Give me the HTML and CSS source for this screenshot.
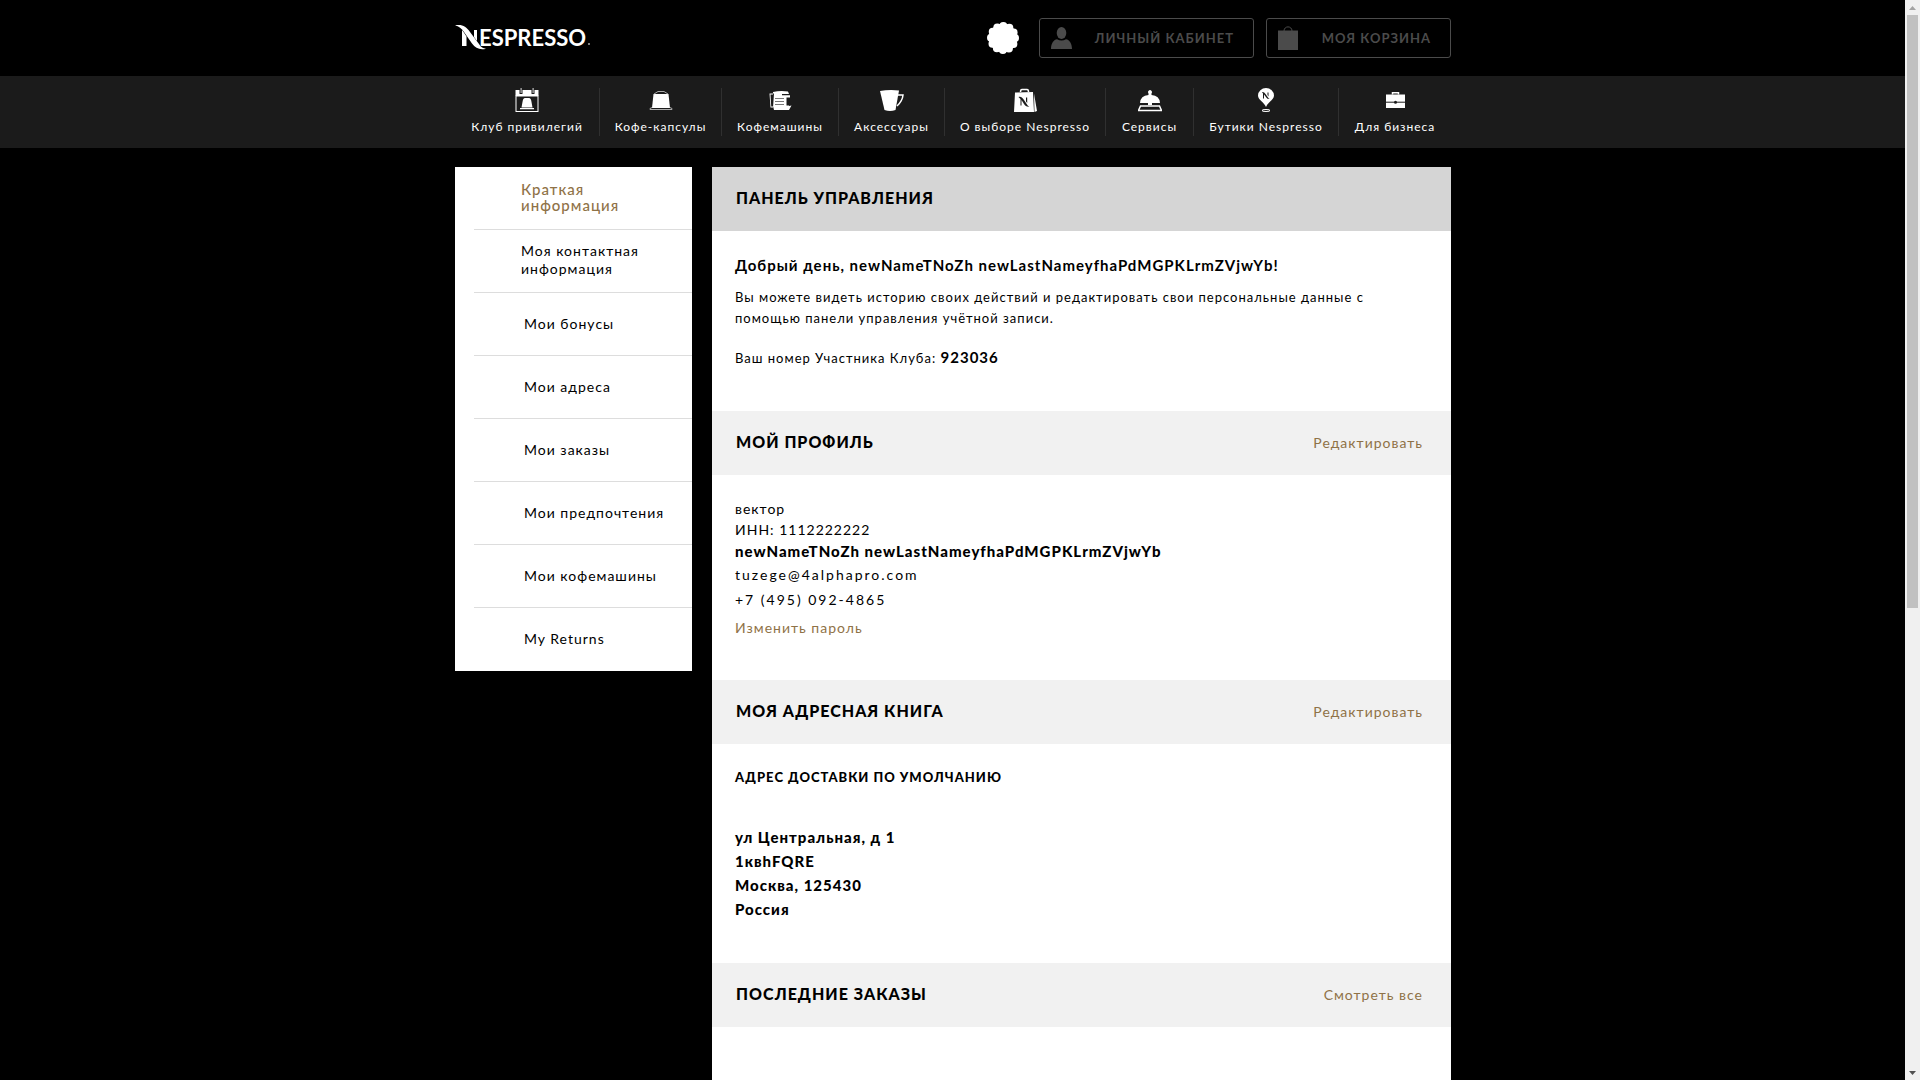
FILE: index.html
```html
<!DOCTYPE html>
<html lang="ru">
<head>
<meta charset="utf-8">
<meta name="viewport" content="width=device-width, initial-scale=1">
<title>Панель управления</title>
<link rel="stylesheet" href="styles.css">
</head>
<body>
<header class="top">
  <div class="wrap top-row">
    <a class="logo" href="#" aria-label="Nespresso">
      <svg width="138" height="28" viewBox="0 0 138 28" fill="#fff">
        <path d="M0 1.500C7 0 11 2.500 15 8L24 20C26 23.500 28 24.500 31 24.700C25 26.500 20.500 24 17 19.500L9 8C6.500 4.500 4 2 0 1.500z"/>
        <path d="M7 6L8.500 8L11.500 12.500V22H7zM19 6H22V17L19 13z"/>
        <text class="logo-text" x="24" y="22">ESPRESSO</text>
        <circle cx="134" cy="20" r="1" fill="#aaa"/>
      </svg>
    </a>
    <svg class="seal" width="32" height="32" viewBox="0 0 32 32" fill="#fff">
      <circle cx="16" cy="16" r="14"/>
      <circle cx="16" cy="16" r="12" fill="none" stroke="#fff" stroke-width="8" stroke-linecap="round" stroke-dasharray="0 6.283"/>
    </svg>
    <button class="top-btn top-btn-account" type="button">
      <svg width="21" height="22" viewBox="0 0 21 22" fill="#4b4b4b"><ellipse cx="10.500" cy="6" rx="4.800" ry="6"/><path d="M0 22C0 16 3 12.500 6 12.200Q10.500 15 15 12.200C18 12.500 21 16 21 22z"/></svg>
      <span>ЛИЧНЫЙ КАБИНЕТ</span>
    </button>
    <button class="top-btn top-btn-cart" type="button">
      <svg width="20" height="24" viewBox="0 0 20 24"><path d="M0 4.500H20V24H0z" fill="#4b4b4b"/><path d="M6 5C6 -.5 14 -.5 14 5" fill="none" stroke="#4b4b4b"/></svg>
      <span>МОЯ КОРЗИНА</span>
    </button>
  </div>
</header>

<nav class="nav">
  <ul class="wrap nav-list">
    <li><a href="#">
      <svg width="24" height="24" viewBox="0 0 24 24" fill="#fff"><path d="M.5 2H23.500V8H.5z"/><rect x="1" y="8" width="22" height="15.500" fill="none" stroke="#fff"/><path d="M4.500 0H7.500V6H4.500zM16.500 0H19.500V6H16.500z" fill="#1b1b1b"/><path d="M5.500 0H6.700V5H5.500zM17.500 0H18.700V5H17.500z" fill="#bbb"/><path d="M10 10H14Q16 10 16.500 14L17.500 19.500H6.500L7.500 14Q8 10 10 10zM5 20H19V21.200H5z"/></svg>
      <span>Клуб привилегий</span></a></li>
    <li><a href="#">
      <svg width="24" height="24" viewBox="0 0 24 24" fill="#fff"><path d="M4.500 6H19.500L21 20H3z"/><path d="M5 6L9 3.500H15L19 6M3 19.500L1 20.500V21.500H23V20.500L21 19.500" fill="none" stroke="#aaa"/></svg>
      <span>Кофе-капсулы</span></a></li>
    <li><a href="#">
      <svg width="24" height="24" viewBox="0 0 24 24" fill="#fff"><path d="M5 4Q12 2.500 20 3.500L21 6H14V7.200H22V9.500H18.500V17.500H21V18L23.500 17.500L21 22H6L5 18zM6 5.500H1.500L2.500 19.500H5" /><path d="M2.500 6.500H5V18.500H3.200z" fill="#1b1b1b"/><path d="M7 10.500H16M7 13.500H16M7 16.500H16" stroke="#777"/></svg>
      <span>Кофемашины</span></a></li>
    <li><a href="#">
      <svg width="24" height="24" viewBox="0 0 24 24"><path d="M0 3Q9 1.500 19 2.500L15.500 22Q10 24 4.500 22z" fill="#fff"/><path d="M18 7H23Q22.500 13 17 18" fill="none" stroke="#fff" stroke-width="1.500"/></svg>
      <span>Аксессуары</span></a></li>
    <li><a href="#">
      <svg width="24" height="24" viewBox="0 0 24 24" fill="#fff"><path d="M2 4.500L20 4L21 24H1zM21 5.500L24 23L21.500 24z"/><path d="M7.500 4Q7.500 1.500 9 1.500H14Q15.500 1.500 15.500 4" fill="none" stroke="#fff" stroke-width="1.500"/><path d="M5.500 9C8 8 9.500 10 11 12L14 16.500C15 18 15.500 18.500 16.500 18.700C13.500 19 12.500 18 11 16L8.500 12V17.500H7.500V11zM13 9.500H14.200V15L13 13.500z" fill="#1b1b1b"/></svg>
      <span>О выборе Nespresso</span></a></li>
    <li><a href="#">
      <svg width="24" height="24" viewBox="0 0 24 24" fill="#fff"><path d="M2 15Q2.500 7.500 10.500 7V5.500A2 2 0 1 1 13.500 5.500V7Q21.500 7.500 22 15H14V17H10V15z"/><path d="M2.500 18H21.500L23.500 22.500H.5z" fill="none" stroke="#fff" stroke-width="1.500"/></svg>
      <span>Сервисы</span></a></li>
    <li><a href="#">
      <svg width="24" height="24" viewBox="0 0 24 24" fill="#fff"><path d="M12 19C10 14 4 12 4 7.500A8 7.500 0 0 1 20 7.500C20 12 14 14 12 19z"/><ellipse cx="12" cy="22.500" rx="4" ry="1" fill="none" stroke="#fff"/><path d="M8 4Q10 3.500 11.500 6L14 9.500Q15 11 16 11Q13.500 11.500 12.300 9.500L10 6.500V10.500H9V5.500zM13.500 4.500H14.500V8.500L13.500 7z" fill="#1b1b1b"/></svg>
      <span>Бутики Nespresso</span></a></li>
    <li><a href="#">
      <svg width="24" height="24" viewBox="0 0 24 24" fill="#fff"><path d="M3 6.500H22V20H3z"/><path d="M9.500 6.500V4.700H15.500V6.500" fill="none" stroke="#fff" stroke-width="1.500"/><path d="M3 14.200H22" stroke="#1b1b1b"/><circle cx="12.500" cy="14.200" r="1.500" fill="#1b1b1b"/></svg>
      <span>Для бизнеса</span></a></li>
  </ul>
</nav>

<div class="wrap page">
  <aside class="side">
    <ul>
      <li class="two-line current"><a href="#">Краткая<br>информация</a></li>
      <li class="two-line"><a href="#">Моя контактная<br>информация</a></li>
      <li><a href="#">Мои бонусы</a></li>
      <li><a href="#">Мои адреса</a></li>
      <li><a href="#">Мои заказы</a></li>
      <li><a href="#">Мои предпочтения</a></li>
      <li><a href="#">Мои кофемашины</a></li>
      <li><a href="#">My Returns</a></li>
    </ul>
  </aside>
  <main class="panel">
    <section>
      <div class="bar bar-main"><h1>ПАНЕЛЬ УПРАВЛЕНИЯ</h1></div>
      <div class="body">
        <p class="hello">Добрый день, newNameTNoZh newLastNameyfhaPdMGPKLrmZVjwYb!</p>
        <p class="intro">Вы можете видеть историю своих действий и редактировать свои персональные данные с помощью панели управления учётной записи.</p>
        <p class="member">Ваш номер Участника Клуба: <strong>923036</strong></p>
      </div>
    </section>
    <section>
      <div class="bar"><h2>МОЙ ПРОФИЛЬ</h2><a href="#">Редактировать</a></div>
      <div class="body">
        <p>вектор</p>
        <p>ИНН: 1112222222</p>
        <p class="name">newNameTNoZh newLastNameyfhaPdMGPKLrmZVjwYb</p>
        <p class="contact">tuzege@4alphapro.com</p>
        <p class="contact">+7 (495) 092-4865</p>
        <p class="password"><a href="#">Изменить пароль</a></p>
      </div>
    </section>
    <section>
      <div class="bar"><h2>МОЯ АДРЕСНАЯ КНИГА</h2><a href="#">Редактировать</a></div>
      <div class="body">
        <h3>АДРЕС ДОСТАВКИ ПО УМОЛЧАНИЮ</h3>
        <address>ул Центральная, д 1<br>1квhFQRE<br>Москва, 125430<br>Россия</address>
      </div>
    </section>
    <section>
      <div class="bar"><h2>ПОСЛЕДНИЕ ЗАКАЗЫ</h2><a href="#">Смотреть все</a></div>
    </section>
  </main>
</div>

<div class="scrollbar" aria-hidden="true">
  <span class="arrow arrow-up"></span>
  <span class="track"><span class="thumb"></span></span>
  <span class="arrow arrow-down"></span>
</div>
</body>
</html>
```
FILE: styles.css
```css
* { box-sizing: border-box; }

body {
  margin: 0;
  padding-right: 14px;
  min-height: 100vh;
  display: flex;
  flex-direction: column;
  background: #000;
  color: #000;
  font: 14px/21px Lato, "Noto Sans", sans-serif;
  letter-spacing: 1px;
}

h1, h2, h3, p, ul { margin: 0; padding: 0; }
ul { list-style: none; }
a { color: #8f7247; text-decoration: none; }
svg { display: block; }

.wrap { width: 100%; max-width: 996px; margin: 0 auto; }

/* Header */
.top-row {
  display: flex;
  align-items: center;
  gap: 12px;
  padding: 18px 0;
}
.logo { margin-right: auto; }
.logo-text { font: 700 22px Lato, sans-serif; letter-spacing: 0; }
.seal { margin-right: 8px; }
.top-btn {
  display: flex;
  align-items: center;
  justify-content: space-between;
  height: 40px;
  padding: 0 19px 0 11px;
  border: 1px solid #4b4b4b;
  border-radius: 3px;
  background: #000;
  color: #4b4b4b;
  font: 700 13px/21px Lato, sans-serif;
  letter-spacing: 1px;
}
.top-btn-account { width: 215px; }
.top-btn-cart { width: 185px; }

/* Main navigation */
.nav { margin-right: -14px; padding: 12px 14px 12px 0; background: #1b1b1b; }
.nav-list {
  display: grid;
  grid-template-columns: 145fr 122fr 117fr 106fr 161fr 88fr 145fr 112fr;
}
.nav-list li { height: 48px; border-right: 1px solid #303030; }
.nav-list li:last-child { border-right: 0; }
.nav-list a {
  display: flex;
  flex-direction: column;
  align-items: center;
  gap: 7px;
  color: #fff;
  font-size: 12px;
  line-height: 16px;
  white-space: nowrap;
}

/* Page columns */
.page {
  flex: 1;
  display: grid;
  grid-template-columns: 237px 1fr;
  gap: 20px;
  padding-top: 19px;
}

.side { align-self: start; padding-left: 19px; background: #fff; }
.side li {
  display: flex;
  align-items: center;
  height: 63px;
  padding: 0 0 2px 50px;
  border-bottom: 1px solid #ddd;
}
.side li:last-child { border-bottom: 0; }
.side a { color: #000; }
.side .two-line { padding-left: 47px; }
.side .two-line a { line-height: 18px; }
.side .current a { color: #8f7247; font-size: 15px; font-weight: 500; line-height: 16px; }

.panel { background: #fff; }
.bar {
  display: flex;
  align-items: center;
  justify-content: space-between;
  height: 64px;
  padding: 0 28px 2px 24px;
  background: #f1f1f1;
}
.bar-main { background: #d5d5d5; }
.bar h1, .bar h2 { font-size: 16px; line-height: 20px; font-weight: 900; }
.body { padding: 23px 40px 42px 23px; }

.hello { font-size: 15px; line-height: 22px; font-weight: 700; }
.intro, .member { font-size: 13px; }
.intro { margin-top: 11px; }
.member { margin-top: 19px; }
.member strong { font-size: 15px; font-weight: 700; line-height: 16px; }
.name { font-size: 15px; line-height: 22px; font-weight: 900; }
.contact { line-height: 25px; letter-spacing: 2px; }
.password { margin-top: 5px; }
h3 { font-size: 13px; line-height: 21px; font-weight: 900; }
address {
  margin-top: 37px;
  font-size: 15px;
  line-height: 24px;
  font-style: normal;
  font-weight: 900;
}

/* Window scrollbar */
.scrollbar {
  position: fixed;
  top: 0;
  right: 0;
  bottom: 0;
  width: 15px;
  display: flex;
  flex-direction: column;
  align-items: center;
  background: #f0f0f0;
}
.arrow {
  width: 7px;
  height: 4px;
  margin: 6px 0 5px;
  background: #a3a3a3;
  clip-path: polygon(50% 0, 100% 100%, 0 100%);
}
.arrow-down { background: #505050; clip-path: polygon(0 0, 100% 0, 50% 100%); }
.track { flex: 1; width: 11px; }
.thumb { display: block; height: 56.500%; background: #c1c1c1; }
```
